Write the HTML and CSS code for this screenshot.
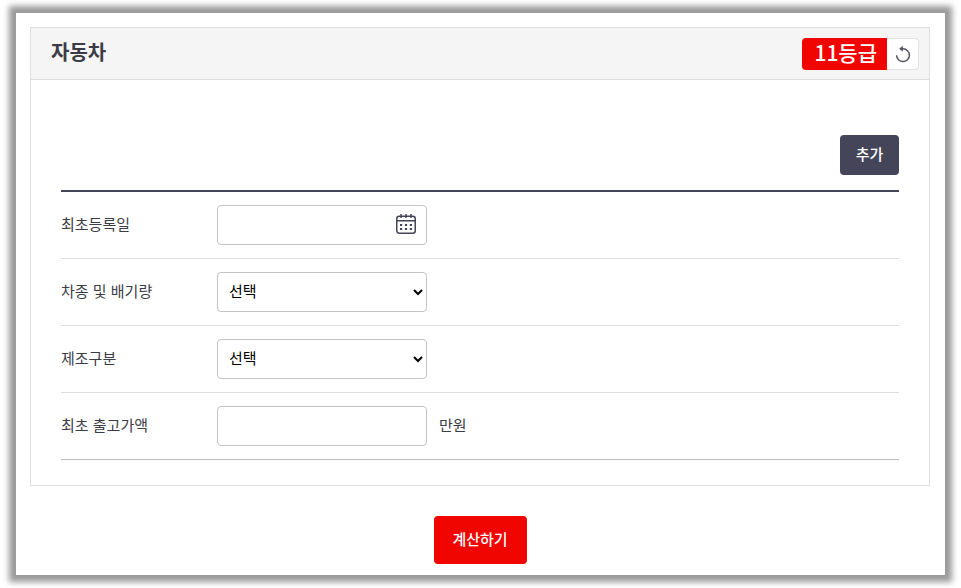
FILE: index.html
```html
<!DOCTYPE html>
<html lang="ko">
<head>
    <meta charset="UTF-8">
    <meta name="viewport" content="width=device-width, initial-scale=1.0">
    <title>자동차</title>
    <link rel="stylesheet" href="styles.css">
</head>
<body>
    <main class="window">
      <form class="calc">
        <section class="panel">
          <header class="panel-head">
            <h1>자동차</h1>
            <div class="grade">
              <output class="grade-value">11등급</output>
              <button type="reset" class="reset" aria-label="초기화">
                <svg width="18" height="20" viewBox="0 0 18 20" fill="none" stroke="#555560" stroke-width="1.5">
                  <path d="M2.6 11.2A6.4 6.4 0 1 0 9 4.8H7"/>
                  <path d="M5.2 4.8L8.8 1.8V7.8Z" fill="#555560" stroke="none"/>
                </svg>
              </button>
            </div>
          </header>
          <div class="panel-body">
            <div class="toolbar">
              <button type="button" class="add">추가</button>
            </div>
            <div class="rows">
              <div class="row">
                <label for="regDate">최초등록일</label>
                <div class="date">
                  <input type="text" id="regDate">
                  <button type="button" class="calendar" aria-label="달력">
                    <svg width="22" height="22" viewBox="0 0 22 22" fill="none" stroke="#45455a" stroke-width="1.5">
                      <rect x="1.75" y="3.25" width="18.5" height="17" rx="2.5"/>
                      <path d="M2 7.8H20M6 1V5M11 1V5M16 1V5"/>
                      <path d="M5 12H7.2M9.9 12H12.1M14.8 12H17M5 16H7.2M9.9 16H12.1M14.8 16H17" stroke-width="2.2"/>
                    </svg>
                  </button>
                </div>
              </div>
              <div class="row">
                <label for="carType">차종 및 배기량</label>
                <select id="carType">
                  <option>선택</option>
                </select>
              </div>
              <div class="row">
                <label for="maker">제조구분</label>
                <select id="maker">
                  <option>선택</option>
                </select>
              </div>
              <div class="row">
                <label for="price">최초 출고가액</label>
                <input type="text" id="price">
                <span class="unit">만원</span>
              </div>
            </div>
          </div>
        </section>
        <button type="button" class="submit">계산하기</button>
      </form>
    </main>
</body>
</html>
```

FILE: styles.css
```css
* {
    margin: 0;
    padding: 0;
    box-sizing: border-box;
}
body {
    padding: 13px 16px;
    background: #fff;
    color: #3c3c46;
    font-family: "Noto Sans CJK KR", "Noto Sans", sans-serif;
    font-size: 15px;
    line-height: 20px;
}
button, input, select {
    font: inherit;
}
button {
    border: none;
    cursor: pointer;
}
.window {
    padding: 14px 15px 11px 14px;
    background: #fff;
    box-shadow: 0 0 6px 7px rgba(0, 0, 0, 0.4);
}
.calc {
    display: flex;
    flex-direction: column;
    align-items: center;
    gap: 30px;
}
.panel {
    width: 100%;
    border: 1px solid #ddd;
}
.panel-head {
    display: flex;
    justify-content: space-between;
    align-items: center;
    padding: 10px 10px 9px 20px;
    background: #f5f5f5;
    border-bottom: 1px solid #ddd;
}
.panel-head h1 {
    padding-bottom: 4px;
    font-size: 20px;
    line-height: 28px;
    font-weight: bold;
}
.grade {
    display: flex;
}
.grade-value {
    padding: 0 10px 4px 12px;
    border-radius: 4px 0 0 4px;
    background: #f00500;
    color: #fff;
    font-size: 21px;
    line-height: 28px;
    font-weight: 500;
}
.reset {
    display: flex;
    justify-content: center;
    align-items: center;
    width: 32px;
    height: 32px;
    border: 1px solid #e2e2e2;
    border-left: none;
    border-radius: 0 4px 4px 0;
    background: #fff;
}
.panel-body {
    padding: 55px 30px 25px;
}
.toolbar {
    display: flex;
    justify-content: flex-end;
    padding-bottom: 15px;
    border-bottom: 2px solid #45455a;
}
.add {
    width: 59px;
    height: 40px;
    padding-bottom: 2px;
    border-radius: 4px;
    background: #45455a;
    color: #fff;
    font-weight: 500;
}
.row {
    display: flex;
    align-items: center;
    padding: 13px 0;
    border-bottom: 1px solid #ddd;
}
.row:last-child {
    border-bottom-color: #bbb;
}
.row label {
    width: 156px;
    padding-bottom: 2px;
}
.row input, .row select {
    width: 210px;
    height: 40px;
    border: 1px solid #c4c4c4;
    border-radius: 4px;
    background: #fff;
    color: #000;
}
.row input {
    padding: 0 12px;
}
.row select {
    padding: 0 1px 3px 7px;
}
.date {
    position: relative;
}
.date input {
    display: block;
    padding-right: 40px;
}
.calendar {
    position: absolute;
    top: 8px;
    right: 10px;
    display: flex;
    background: none;
}
.unit {
    margin-left: 12px;
    padding-bottom: 2px;
}
.submit {
    width: 93px;
    height: 48px;
    padding-bottom: 2px;
    border-radius: 4px;
    background: #f00500;
    color: #fff;
    font-weight: 500;
}
```
